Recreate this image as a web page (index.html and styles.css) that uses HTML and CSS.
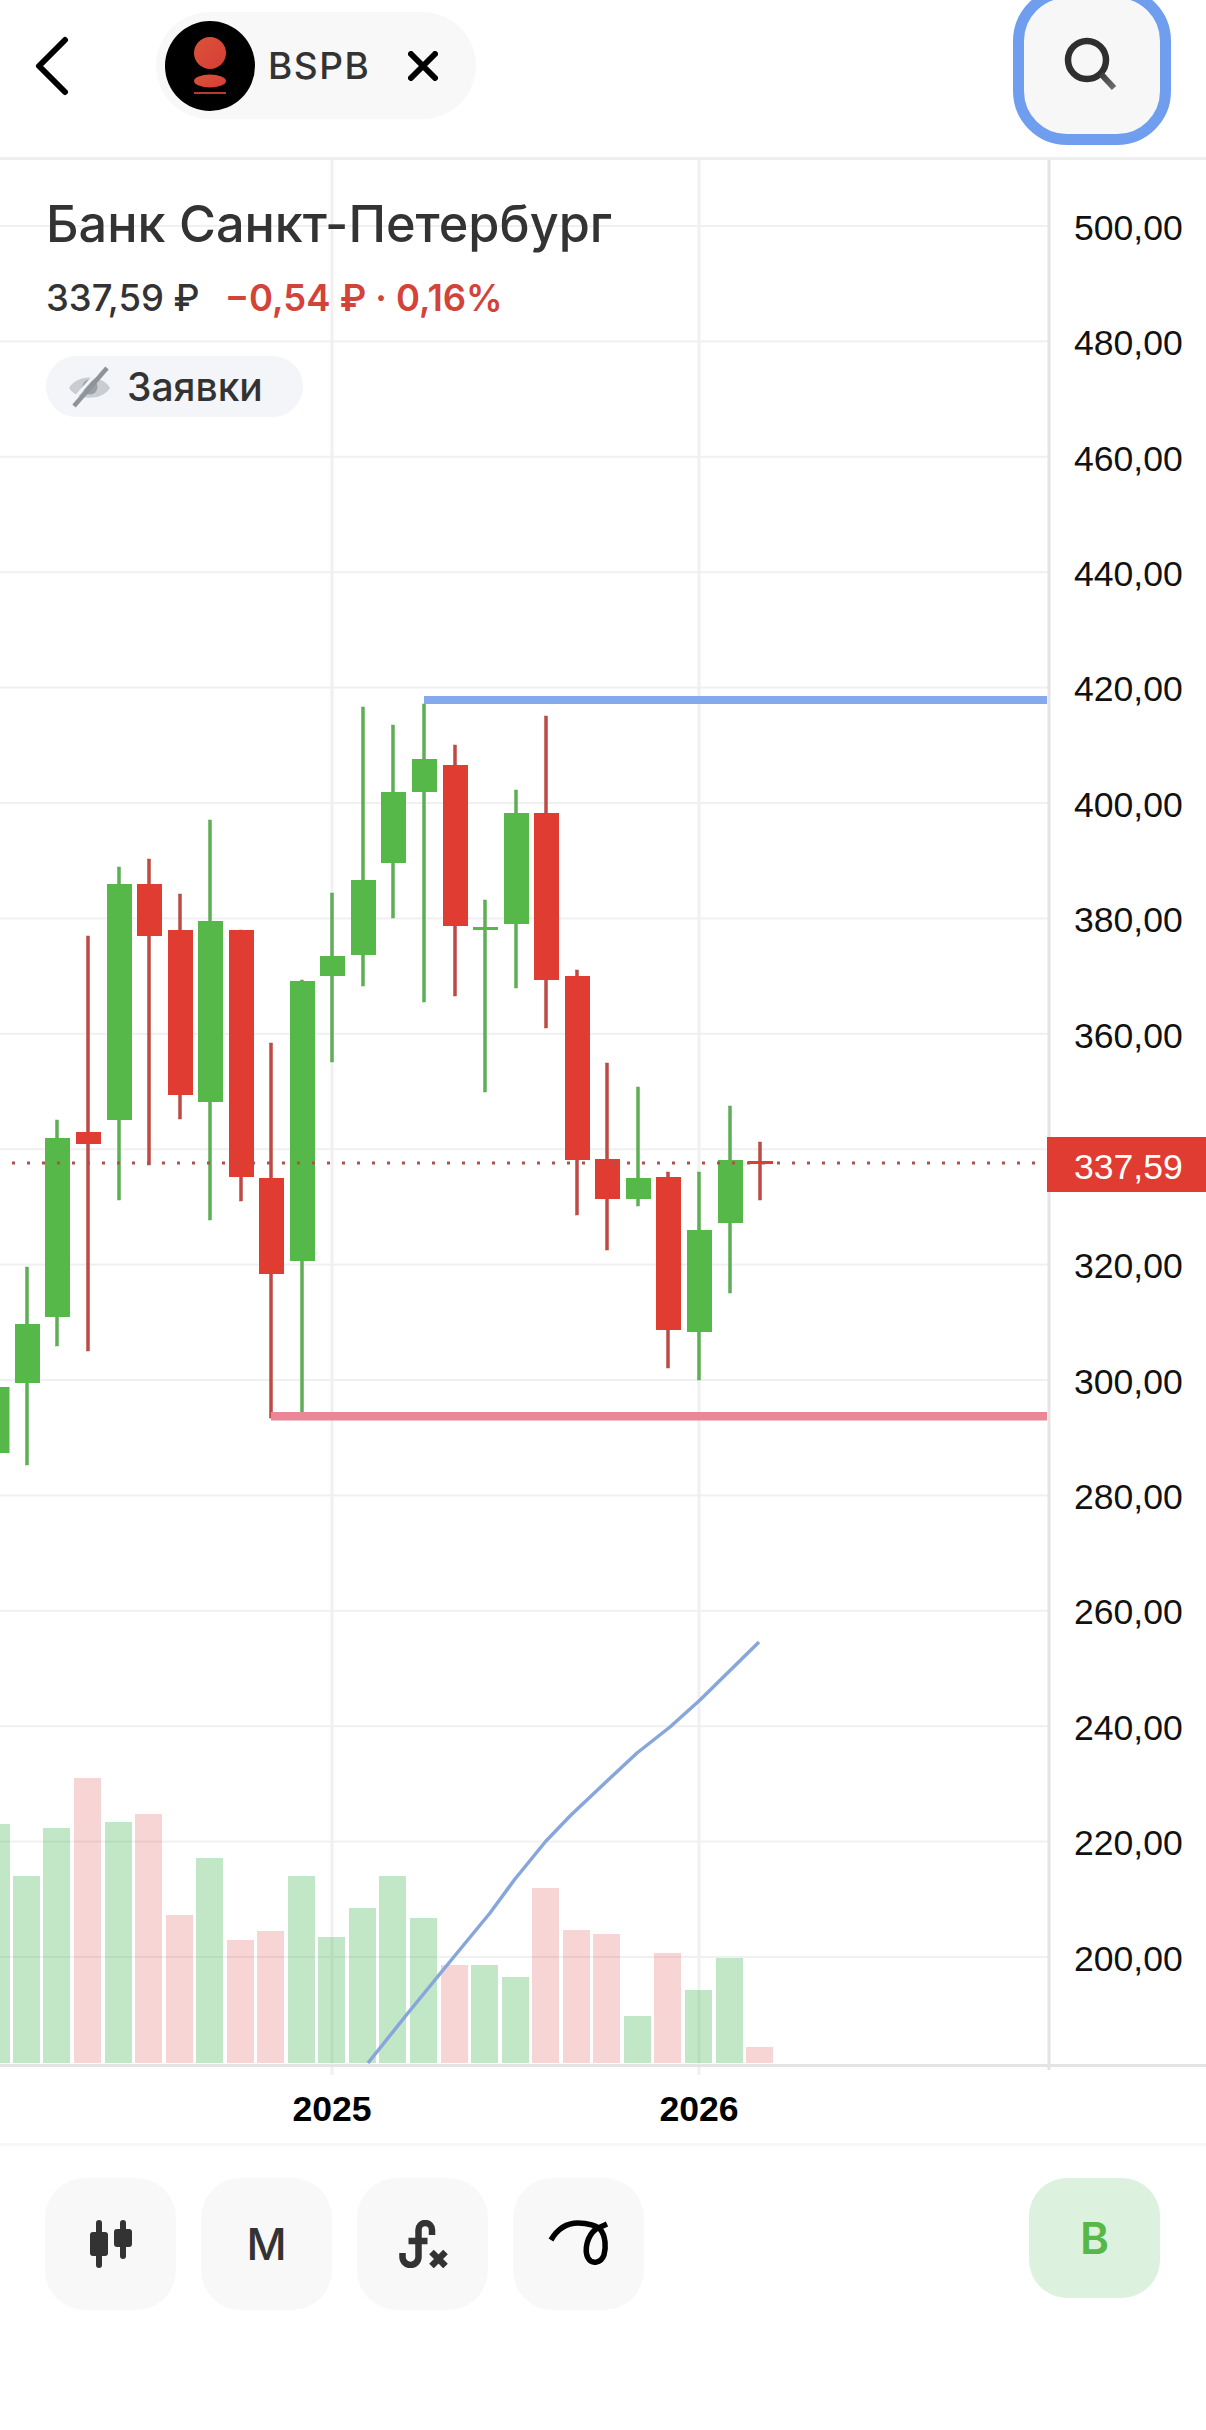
FILE: index.html
```html
<!DOCTYPE html>
<html lang="ru">
<head>
    <meta charset="UTF-8">
    <meta name="viewport" content="width=device-width, initial-scale=1.0">
    <title>BSPB - график</title>
    <link rel="stylesheet" href="styles.css">
</head>
<body>
    <div class="app">
        <div class="top-bar">
            <svg class="back-icon" width="36" height="60" viewBox="0 0 36 60">
                <path d="M30 4 L4 30 L30 56"/>
            </svg>
            <div class="ticker-chip">
                <svg class="ticker-logo" width="90" height="90" viewBox="0 0 90 90">
                    <defs>
                        <linearGradient id="logo-red" x1="0" y1="0" x2="1" y2="1">
                            <stop offset="0" stop-color="#d9533a"/>
                            <stop offset="1" stop-color="#d83c35"/>
                        </linearGradient>
                    </defs>
                    <circle cx="45" cy="45" r="45" fill="#000"/>
                    <circle cx="45" cy="32" r="16" fill="url(#logo-red)"/>
                    <ellipse cx="45" cy="60" rx="16" ry="6.5" fill="url(#logo-red)"/>
                    <rect x="29" y="71" width="32" height="2" fill="#b8392e"/>
                </svg>
                <span class="ticker-name">BSPB</span>
                <svg class="close-icon" width="30" height="30" viewBox="0 0 30 30">
                    <path d="M3 3 L27 27 M27 3 L3 27"/>
                </svg>
            </div>
            <div class="search-button">
                <svg width="60" height="60" viewBox="0 0 60 60">
                    <defs>
                        <linearGradient id="handle-fade" gradientUnits="userSpaceOnUse" x1="36" y1="36" x2="50" y2="52">
                            <stop offset="0" stop-color="#333"/>
                            <stop offset="1" stop-color="#6a6a6a"/>
                        </linearGradient>
                    </defs>
                    <circle cx="25" cy="24" r="19" fill="none" stroke="#2f2f2f" stroke-width="6.5"/>
                    <path d="M39 38 L52 52" fill="none" stroke="url(#handle-fade)" stroke-width="6"/>
                </svg>
            </div>
        </div>

        <div class="chart">
            <svg class="chart-canvas" width="1206" height="1916" viewBox="0 160 1206 1916">
                <g class="grid">
                    <rect x="0" y="225" width="1048" height="2"/>
                    <rect x="0" y="340.4" width="1048" height="2"/>
                    <rect x="0" y="455.8" width="1048" height="2"/>
                    <rect x="0" y="571.2" width="1048" height="2"/>
                    <rect x="0" y="686.6" width="1048" height="2"/>
                    <rect x="0" y="802" width="1048" height="2"/>
                    <rect x="0" y="917.4" width="1048" height="2"/>
                    <rect x="0" y="1032.8" width="1048" height="2"/>
                    <rect x="0" y="1148.2" width="1048" height="2"/>
                    <rect x="0" y="1263.6" width="1048" height="2"/>
                    <rect x="0" y="1379" width="1048" height="2"/>
                    <rect x="0" y="1494.4" width="1048" height="2"/>
                    <rect x="0" y="1609.8" width="1048" height="2"/>
                    <rect x="0" y="1725.2" width="1048" height="2"/>
                    <rect x="0" y="1840.6" width="1048" height="2"/>
                    <rect x="0" y="1956" width="1048" height="2"/>
                    <rect x="330.5" y="160" width="3" height="1915"/>
                    <rect x="697.5" y="160" width="3" height="1915"/>
                </g>

                <!-- объёмы -->
                <g class="vol-up">
                    <rect x="-17" y="1824" width="27" height="239"/>
                    <rect x="13" y="1876" width="27" height="187"/>
                    <rect x="43" y="1828" width="27" height="235"/>
                    <rect x="105" y="1822" width="27" height="241"/>
                    <rect x="196" y="1858" width="27" height="205"/>
                    <rect x="288" y="1876" width="27" height="187"/>
                    <rect x="318" y="1937" width="27" height="126"/>
                    <rect x="349" y="1908" width="27" height="155"/>
                    <rect x="379" y="1876" width="27" height="187"/>
                    <rect x="410" y="1918" width="27" height="145"/>
                    <rect x="471" y="1965" width="27" height="98"/>
                    <rect x="502" y="1977" width="27" height="86"/>
                    <rect x="624" y="2016" width="27" height="47"/>
                    <rect x="685" y="1990" width="27" height="73"/>
                    <rect x="716" y="1958" width="27" height="105"/>
                </g>
                <g class="vol-down">
                    <rect x="74" y="1778" width="27" height="285"/>
                    <rect x="135" y="1814" width="27" height="249"/>
                    <rect x="166" y="1915" width="27" height="148"/>
                    <rect x="227" y="1940" width="27" height="123"/>
                    <rect x="257" y="1931" width="27" height="132"/>
                    <rect x="441" y="1965" width="27" height="98"/>
                    <rect x="532" y="1888" width="27" height="175"/>
                    <rect x="563" y="1930" width="27" height="133"/>
                    <rect x="593" y="1934" width="27" height="129"/>
                    <rect x="654" y="1953" width="27" height="110"/>
                    <rect x="746" y="2047" width="27" height="16"/>
                </g>

                <polyline class="sma" points="368,2063 408,2013 439,1975 462,1947 490,1913 515,1879 546,1841 571,1815 607,1781 637,1753 670,1727 700,1700 759,1642"/>

                <!-- свечи -->
                <g class="wick-up">
                    <rect x="25.5" y="1267" width="3" height="198"/>
                    <rect x="55.5" y="1120" width="3" height="226"/>
                    <rect x="117.5" y="867" width="3" height="333"/>
                    <rect x="208.5" y="820" width="3" height="400"/>
                    <rect x="300.5" y="980" width="3" height="433"/>
                    <rect x="330.5" y="893" width="3" height="169"/>
                    <rect x="361.5" y="707" width="3" height="279"/>
                    <rect x="391.5" y="725" width="3" height="193"/>
                    <rect x="422.5" y="704" width="3" height="298"/>
                    <rect x="483.5" y="900" width="3" height="192"/>
                    <rect x="514.5" y="790" width="3" height="198"/>
                    <rect x="636.5" y="1087" width="3" height="119"/>
                    <rect x="697.5" y="1172" width="3" height="208"/>
                    <rect x="728.5" y="1106" width="3" height="187"/>
                </g>
                <g class="wick-down">
                    <rect x="86.5" y="936" width="3" height="415"/>
                    <rect x="147.5" y="859" width="3" height="306"/>
                    <rect x="178.5" y="894" width="3" height="225"/>
                    <rect x="239.5" y="930" width="3" height="271"/>
                    <rect x="269.5" y="1043" width="3" height="375"/>
                    <rect x="453.5" y="745" width="3" height="251"/>
                    <rect x="544.5" y="716" width="3" height="312"/>
                    <rect x="575.5" y="970" width="3" height="245"/>
                    <rect x="605.5" y="1063" width="3" height="187"/>
                    <rect x="666.5" y="1172" width="3" height="196"/>
                    <rect x="758.5" y="1142" width="3" height="58"/>
                </g>
                <g class="body-up">
                    <rect x="-15.5" y="1387" width="25" height="66"/>
                    <rect x="15" y="1324" width="25" height="59"/>
                    <rect x="45" y="1138" width="25" height="179"/>
                    <rect x="107" y="884" width="25" height="236"/>
                    <rect x="198" y="921" width="25" height="181"/>
                    <rect x="290" y="981" width="25" height="280"/>
                    <rect x="320" y="956" width="25" height="20"/>
                    <rect x="351" y="880" width="25" height="75"/>
                    <rect x="381" y="792" width="25" height="71"/>
                    <rect x="412" y="759" width="25" height="33"/>
                    <rect x="473" y="927" width="25" height="3"/>
                    <rect x="504" y="813" width="25" height="111"/>
                    <rect x="626" y="1178" width="25" height="21"/>
                    <rect x="687" y="1230" width="25" height="102"/>
                    <rect x="718" y="1160" width="25" height="63"/>
                </g>
                <g class="body-down">
                    <rect x="76" y="1132" width="25" height="12"/>
                    <rect x="137" y="884" width="25" height="52"/>
                    <rect x="168" y="930" width="25" height="165"/>
                    <rect x="229" y="930" width="25" height="247"/>
                    <rect x="259" y="1178" width="25" height="96"/>
                    <rect x="443" y="765" width="25" height="161"/>
                    <rect x="534" y="813" width="25" height="167"/>
                    <rect x="565" y="976" width="25" height="184"/>
                    <rect x="595" y="1159" width="25" height="40"/>
                    <rect x="656" y="1177" width="25" height="153"/>
                    <rect x="748" y="1161" width="25" height="3"/>
                </g>

                <line class="last-price" x1="12" y1="1163" x2="1038" y2="1163"/>
                <rect class="level-high" x="424" y="696" width="623" height="8"/>
                <rect class="level-low" x="271" y="1412" width="776" height="8.5"/>

                <g class="axis">
                    <rect x="1047.5" y="160" width="3" height="1910"/>
                    <rect x="0" y="2064" width="1206" height="3"/>
                </g>
            </svg>

            <div class="instrument">
                <div class="instrument-name">Банк Санкт-Петербург</div>
                <div class="instrument-price">
                    <span>337,59 ₽</span>
                    <span class="price-change">−0,54 ₽ · 0,16%</span>
                </div>
                <div class="orders-chip">
                    <svg width="42" height="42" viewBox="0 0 42 42">
                        <path d="M0 22 C8 8 33 8 41 22 C33 35 8 35 0 22Z" fill="#c9ccd1"/>
                        <circle cx="21" cy="21" r="7.5" fill="#9a9ea5"/>
                        <path d="M38 2 L6 38" stroke="#f3f5f8" stroke-width="3" transform="translate(-3 -3)"/>
                        <path d="M38 2 L5 40" stroke="#8f939a" stroke-width="4.5"/>
                    </svg>
                    <span>Заявки</span>
                </div>
            </div>

            <div class="price-axis">
                <div class="price-label">500,00</div>
                <div class="price-label">480,00</div>
                <div class="price-label">460,00</div>
                <div class="price-label">440,00</div>
                <div class="price-label">420,00</div>
                <div class="price-label">400,00</div>
                <div class="price-label">380,00</div>
                <div class="price-label">360,00</div>
                <div class="price-label"><span class="price-tag">337,59</span></div>
                <div class="price-label">320,00</div>
                <div class="price-label">300,00</div>
                <div class="price-label">280,00</div>
                <div class="price-label">260,00</div>
                <div class="price-label">240,00</div>
                <div class="price-label">220,00</div>
                <div class="price-label">200,00</div>
            </div>
        </div>

        <div class="time-axis">
            <span class="year">2025</span>
            <span class="year">2026</span>
        </div>

        <div class="toolbar">
            <div class="tool-button">
                <svg width="48" height="48" viewBox="87 2220 48 48">
                    <g fill="#333">
                        <rect x="96" y="2220" width="6" height="48" rx="3"/>
                        <rect x="90" y="2232" width="18" height="24" rx="3"/>
                        <rect x="120" y="2220" width="6" height="39" rx="3"/>
                        <rect x="114" y="2229" width="18" height="18" rx="3"/>
                    </g>
                </svg>
            </div>
            <div class="tool-button tool-interval">М</div>
            <div class="tool-button">
                <svg width="52" height="48" viewBox="396.5 2220 52 48">
                    <g fill="none" stroke="#333" stroke-width="6.5">
                        <path d="M431.5 2235 V2230 A6.75 7 0 0 0 418 2230 V2257 A8 8 0 0 1 402 2257 V2253"/>
                        <path d="M408 2241 H427"/>
                        <path d="M431 2252 L445 2266 M445 2252 L431 2266"/>
                    </g>
                </svg>
            </div>
            <div class="tool-button">
                <svg width="64" height="48" viewBox="547 2220 64 48">
                    <path d="M551 2240 C558 2228 568 2223 578 2223 C588 2223 597 2226 600 2229 C606 2236 606 2248 604 2255 C601 2263 592 2265 588 2258 C584 2250 587 2236 596 2229 L607 2224" fill="none" stroke="#000" stroke-width="5.5"/>
                </svg>
            </div>
            <div class="trade-button">В</div>
        </div>
    </div>
</body>
</html>
```

FILE: styles.css
```css
html, body {
    margin: 0;
    padding: 0;
    background-color: #fff;
}
body {
    font-family: Inter, "Noto Sans", sans-serif;
    color: #333;
}
.app {
    width: 1206px;
    height: 2430px;
    overflow: hidden;
    display: flex;
    flex-direction: column;
}

/* верхняя панель */
.top-bar {
    height: 160px;
    box-sizing: border-box;
    border-bottom: 3px solid #eee;
    display: flex;
    align-items: flex-start;
    padding-left: 35px;
    flex-shrink: 0;
}
.back-icon {
    margin-top: 36px;
    fill: none;
    stroke: #000;
    stroke-width: 6;
    stroke-linecap: round;
    stroke-linejoin: round;
}
.ticker-chip {
    width: 320px;
    height: 107px;
    box-sizing: border-box;
    margin: 12px 0 0 85px;
    padding-left: 9px;
    border-radius: 54px;
    background-color: #f8f8f8;
    display: flex;
    align-items: center;
}
.ticker-name {
    margin-left: 13px;
    font-size: 37px;
    font-weight: 500;
    letter-spacing: 1.5px;
    line-height: 1;
}
.close-icon {
    margin-left: 38px;
    fill: none;
    stroke: #000;
    stroke-width: 6;
    stroke-linecap: round;
}
.search-button {
    width: 158px;
    height: 158px;
    box-sizing: border-box;
    margin: -13px 0 0 auto;
    margin-right: 35px;
    border: 11px solid #709eee;
    border-radius: 54px;
    background-color: #f7f7f7;
    display: flex;
    align-items: center;
    justify-content: center;
    flex-shrink: 0;
}

/* график */
.chart {
    position: relative;
    height: 1916px;
    flex-shrink: 0;
}
.chart-canvas {
    display: block;
}
.grid { fill: #f0f0f0; }
.vol-up { fill: #4ab85a; fill-opacity: 0.34; }
.vol-down { fill: #d9403a; fill-opacity: 0.22; }
.sma {
    fill: none;
    stroke: #87a6dc;
    stroke-width: 3.5;
    stroke-linejoin: round;
}
.wick-up { fill: #5dae54; stroke: #5dae54; stroke-width: 0.5; }
.wick-down { fill: #bd4a45; stroke: #bd4a45; stroke-width: 0.5; }
.body-up { fill: #57b84a; }
.body-down { fill: #e03c31; }
.last-price {
    stroke: #b3504c;
    stroke-width: 3;
    stroke-dasharray: 3 12;
}
.level-high { fill: #84a9ec; }
.level-low { fill: #e98797; }
.axis { fill: #e4e4e4; }

.instrument {
    position: absolute;
    top: 34px;
    left: 46px;
}
.instrument-name {
    font-size: 50.4px;
    font-weight: 500;
    line-height: 60px;
    white-space: nowrap;
}
.instrument-price {
    margin-top: 22px;
    font-size: 36.4px;
    font-weight: 500;
    line-height: 44px;
    display: flex;
    gap: 25px;
}
.price-change {
    color: #d2433a;
    font-weight: 600;
}
.orders-chip {
    width: 257px;
    height: 61px;
    box-sizing: border-box;
    margin-top: 36px;
    padding-left: 23px;
    border-radius: 31px;
    background-color: #f3f5f8;
    display: flex;
    align-items: center;
    gap: 16px;
    font-size: 39px;
    font-weight: 500;
}
.price-axis {
    position: absolute;
    top: 10.8px;
    left: 1048px;
    width: 158px;
}
.price-label {
    position: relative;
    height: 115.4px;
    line-height: 115.4px;
    padding-left: 26px;
    font-family: "Liberation Sans", Arial, sans-serif;
    font-size: 35.6px;
    color: #111;
}
.price-tag {
    position: absolute;
    top: 43px;
    left: -1px;
    width: 159px;
    height: 55px;
    box-sizing: border-box;
    padding-left: 27px;
    line-height: 60px;
    background-color: #e03c31;
    color: #fff;
}

/* шкала времени */
.time-axis {
    height: 67px;
    box-sizing: border-box;
    padding-left: 292px;
    display: flex;
    align-items: center;
    gap: 287px;
    flex-shrink: 0;
}
.year {
    width: 80px;
    text-align: center;
    font-family: "Liberation Sans", Arial, sans-serif;
    font-size: 35.6px;
    font-weight: bold;
    color: #000;
}

/* нижняя панель */
.toolbar {
    border-top: 3px solid #f6f6f6;
    padding: 32px 46px 0 45px;
    display: flex;
    align-items: flex-start;
    gap: 25px;
}
.tool-button {
    width: 131px;
    height: 132px;
    border-radius: 40px;
    background-color: #f8f8f8;
    display: flex;
    align-items: center;
    justify-content: center;
}
.tool-interval {
    font-family: Inter, sans-serif;
    font-size: 44px;
    font-weight: 500;
}
.trade-button {
    width: 131px;
    height: 120px;
    margin-left: auto;
    border-radius: 38px;
    background-color: #dcf1de;
    color: #57b84a;
    display: flex;
    align-items: center;
    justify-content: center;
    font-size: 44px;
    font-weight: 600;
}
```
